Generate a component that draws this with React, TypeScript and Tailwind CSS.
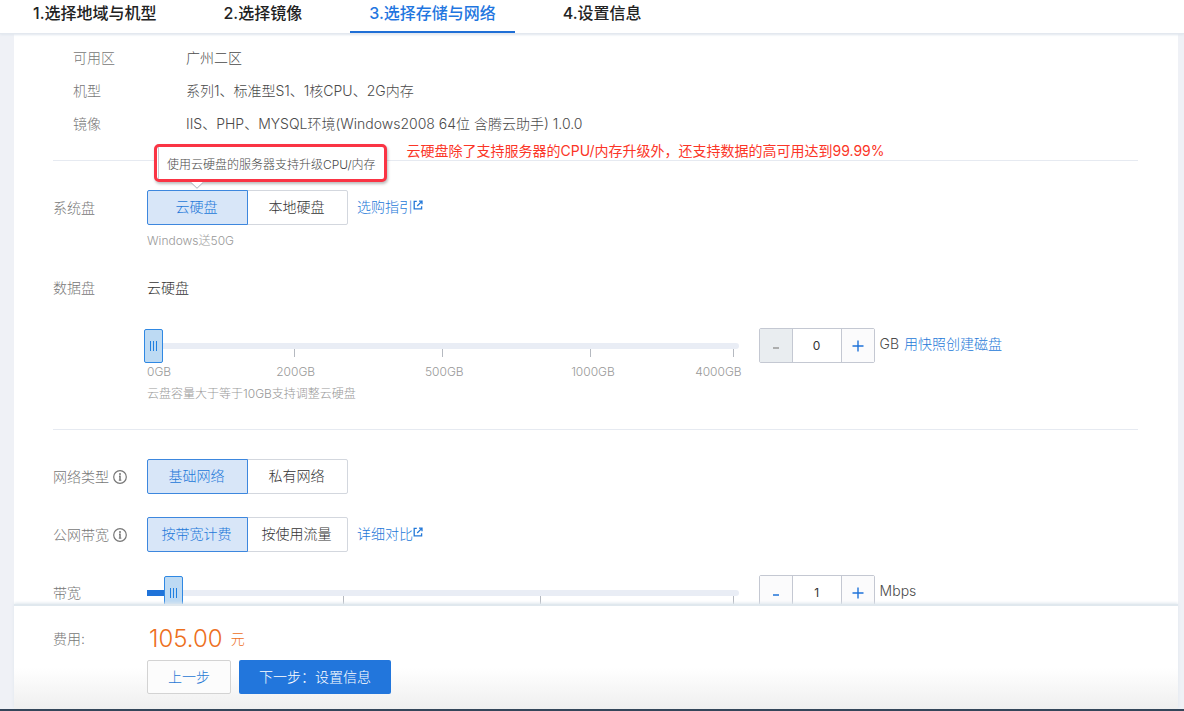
import clsx from "clsx";
import { useState, type CSSProperties, type ReactNode } from "react";

const steps = ["1.选择地域与机型", "2.选择镜像", "3.选择存储与网络", "4.设置信息"];

const summary = [
  { label: "可用区", value: "广州二区" },
  { label: "机型", value: "系列1、标准型S1、1核CPU、2G内存" },
  { label: "镜像", value: "IIS、PHP、MYSQL环境(Windows2008 64位 含腾云助手) 1.0.0" },
];

function ExternalIcon() {
  return (
    <svg
      viewBox="0 0 10 10"
      className="mb-1 size-[10px]"
      fill="none"
      stroke="currentColor"
      strokeWidth="1.3"
      aria-hidden="true"
    >
      <path d="M3.8 1.4H1.2v7.4h7.4V6.2" />
      <path d="M6 1.2h3v3M8.8 1.4L4.2 6" />
    </svg>
  );
}

function InfoIcon() {
  return (
    <svg viewBox="0 0 14 14" className="size-[14px] text-[#777]" aria-hidden="true">
      <circle cx="7" cy="7" r="6.3" fill="none" stroke="currentColor" strokeWidth="1.2" />
      <circle cx="7" cy="4" r="1" fill="currentColor" />
      <path d="M6 6.2h1v4" fill="none" stroke="currentColor" strokeWidth="1.5" />
      <path d="M5.8 10.2h2.6" fill="none" stroke="currentColor" strokeWidth="1" />
    </svg>
  );
}

function Row({
  label,
  info,
  className,
  children,
}: {
  label: string;
  info?: boolean;
  className?: string;
  children: ReactNode;
}) {
  return (
    <div className={clsx("flex items-start", className)}>
      <div className="flex h-[35px] w-[94px] shrink-0 items-center gap-1 text-[#777]">
        {label}
        {info && <InfoIcon />}
      </div>
      <div className="min-w-0 flex-1">{children}</div>
    </div>
  );
}

function Segmented({ label, options }: { label: string; options: string[] }) {
  const [active, setActive] = useState(options[0]);

  return (
    <div role="group" aria-label={label} className="flex">
      {options.map((option) => (
        <button
          key={option}
          type="button"
          aria-pressed={option === active}
          onClick={() => setActive(option)}
          className={clsx(
            "h-[35px] w-[101px] border pr-0.5 pb-0.5 first:rounded-l-xs last:-ml-px last:rounded-r-xs",
            option === active
              ? "relative border-[#3d87de] bg-[#d8e6f8] text-[#2378d8]"
              : "border-[#d3d7de] bg-white text-[#333]",
          )}
        >
          {option}
        </button>
      ))}
    </div>
  );
}

function MoreLink({ children }: { children: ReactNode }) {
  return (
    <a href="#" className="flex items-center pb-0.5 text-[#2378d8]">
      {children}
      <ExternalIcon />
    </a>
  );
}

function Slider({
  label,
  value,
  max,
  segments,
  onChange,
}: {
  label: string;
  value: number;
  max: number;
  segments: number;
  onChange: (value: number) => void;
}) {
  return (
    <div>
      <div className="-ml-[3px]">
        <input
          type="range"
          aria-label={label}
          min={0}
          max={max}
          value={value}
          onChange={(e) => onChange(Number(e.target.value))}
          style={{ "--fill": `${(value / max) * 100}%` } as CSSProperties}
          className="relative z-10 block h-[35px] w-full appearance-none bg-transparent [&::-webkit-slider-runnable-track]:h-[6px] [&::-webkit-slider-runnable-track]:rounded-r-[3px] [&::-webkit-slider-runnable-track]:bg-[linear-gradient(to_right,transparent_3px,#1f73d9_3px,#1f73d9_var(--fill),#e9edf5_var(--fill))] [&::-webkit-slider-thumb]:-mt-[14px] [&::-webkit-slider-thumb]:h-[34px] [&::-webkit-slider-thumb]:w-[19px] [&::-webkit-slider-thumb]:appearance-none [&::-webkit-slider-thumb]:rounded-xs [&::-webkit-slider-thumb]:border [&::-webkit-slider-thumb]:border-[#2f88e3] [&::-webkit-slider-thumb]:bg-[#bddaf3] [&::-webkit-slider-thumb]:bg-[repeating-linear-gradient(to_right,#1f7fe0_0_1px,transparent_1px_3px)] [&::-webkit-slider-thumb]:bg-size-[7px_10px] [&::-webkit-slider-thumb]:bg-center [&::-webkit-slider-thumb]:bg-no-repeat"
        />
      </div>
      <div className="-mt-[14px] mb-[6px] grid h-2 auto-cols-fr grid-flow-col">
        {Array.from({ length: segments }, (_, i) => (
          <div key={i} className="border-r border-[#b5b9c0] last:mr-[5px]" />
        ))}
      </div>
    </div>
  );
}

function Stepper({
  label,
  value,
  onChange,
}: {
  label: string;
  value: number;
  onChange: (value: number) => void;
}) {
  return (
    <div className="flex h-[35px] rounded-xs border border-[#c4c8d2] bg-white">
      <button
        type="button"
        aria-label={`减少${label}`}
        disabled={value === 0}
        onClick={() => onChange(value - 1)}
        className="flex w-8 items-center justify-center bg-[#fbfbfc] pt-1 text-[#1f73d9] disabled:bg-[#e9edf0] disabled:text-[#999]"
      >
        <svg viewBox="0 0 6 2" className="h-[2px] w-[6px]" aria-hidden="true">
          <path d="M0 1h6" stroke="currentColor" strokeWidth="1.5" />
        </svg>
      </button>
      <input
        type="text"
        aria-label={label}
        value={value}
        onChange={(e) => onChange(Number(e.target.value) || 0)}
        className="w-[50px] border-x border-[#c4c8d2] text-center text-xs font-normal text-[#333]"
      />
      <button
        type="button"
        aria-label={`增加${label}`}
        onClick={() => onChange(value + 1)}
        className="flex w-8 items-center justify-center bg-[#fbfbfc] text-[#1f73d9]"
      >
        <svg viewBox="0 0 12 12" className="size-3" aria-hidden="true">
          <path d="M6 .5v11M.5 6h11" stroke="currentColor" strokeWidth="1.4" />
        </svg>
      </button>
    </div>
  );
}

export default function App() {
  const [step, setStep] = useState(2);
  const [disk, setDisk] = useState(0);
  const [bandwidth, setBandwidth] = useState(1);

  return (
    <div className="flex h-screen flex-col overflow-hidden border-b-2 border-[#34465a] bg-[#eff1f6] font-['Inter','Noto_Sans_CJK_SC',sans-serif] text-sm font-light text-[#4a4a4a]">
      <nav className="relative z-20 flex shrink-0 gap-[29px] border-b border-[#e3e8ef] bg-white pl-3.5 shadow-[0_1px_2px_#e1e7ee]">
        {steps.map((title, i) => (
          <button
            key={title}
            type="button"
            onClick={() => setStep(i)}
            className={clsx(
              "border-b-2 px-[19px] pb-[5px] text-[16px] leading-[26px] font-medium",
              i === step ? "border-[#1f6fd6] text-[#1f76e0]" : "border-transparent text-[#222]",
            )}
          >
            {title}
          </button>
        ))}
      </nav>

      <main className="mr-1.5 ml-3.5 min-h-0 flex-1 overflow-hidden bg-white pt-[7px] pr-10 pl-[39px]">
        <dl className="pl-5 leading-[33px]">
          {summary.map(({ label, value }) => (
            <div key={label} className="flex">
              <dt className="w-[113px] shrink-0 text-[#777]">{label}</dt>
              <dd>{value}</dd>
            </div>
          ))}
        </dl>

        <section className="mt-5 border-t border-[#e6eaf1] pt-[29px]">
          <Row label="系统盘">
            <div className="relative flex items-center gap-[9px]">
              <Segmented label="系统盘" options={["云硬盘", "本地硬盘"]} />
              <MoreLink>选购指引</MoreLink>
              <div className="absolute bottom-full left-[7px] mb-2 flex items-start gap-5 whitespace-nowrap">
                <div
                  role="tooltip"
                  className="relative rounded-[5px] border-3 border-[#fa3444] bg-white pl-px shadow-[1px_2px_3px_#0004]"
                >
                  <div className="border-l border-[#c8ccd4] px-2 pt-1 text-xs leading-7">
                    使用云硬盘的服务器支持升级CPU/内存
                  </div>
                  <svg
                    viewBox="0 0 14 7"
                    className="absolute top-full left-[33px] mt-[3px] h-[7px] w-[14px]"
                    aria-hidden="true"
                  >
                    <path d="M.5 0L7 6.3L13.5 0" fill="#fff" stroke="#a9afba" />
                  </svg>
                </div>
                <p className="leading-[14px] font-normal text-[#fb3527]">
                  云硬盘除了支持服务器的CPU/内存升级外，还支持数据的高可用达到99.99%
                </p>
              </div>
            </div>
            <p className="mt-2 text-xs leading-4 text-[#999]">Windows送50G</p>
          </Row>

          <Row label="数据盘" className="mt-[21px]">
            <p className="leading-[35px] text-[#333]">云硬盘</p>
            <div className="mt-[23px] flex items-start gap-[17px]">
              <div className="w-3/5 pr-[3px]">
                <Slider label="数据盘容量" value={disk} max={4000} segments={4} onChange={setDisk} />
                <div className="-mr-[3px] flex pt-px text-xs leading-4 text-[#999]">
                  <span className="flex-1">0GB</span>
                  <span className="flex-2 text-center">200GB</span>
                  <span className="flex-2 text-center">500GB</span>
                  <span className="flex-2 text-center">1000GB</span>
                  <span className="flex-1 text-right">4000GB</span>
                </div>
                <p className="mt-[6px] text-xs leading-4 text-[#999]">
                  云盘容量大于等于10GB支持调整云硬盘
                </p>
              </div>
              <div className="flex items-start gap-[5px] leading-8">
                <Stepper label="容量" value={disk} onChange={setDisk} />
                <span>GB</span>
                <a href="#" className="text-[#2378d8]">
                  用快照创建磁盘
                </a>
              </div>
            </div>
          </Row>
        </section>

        <section className="mt-[27px] border-t border-[#e6eaf1] pt-[29px]">
          <Row label="网络类型" info>
            <Segmented label="网络类型" options={["基础网络", "私有网络"]} />
          </Row>
          <Row label="公网带宽" info className="mt-[23px]">
            <div className="flex items-center gap-[9px]">
              <Segmented label="公网带宽" options={["按带宽计费", "按使用流量"]} />
              <MoreLink>详细对比</MoreLink>
            </div>
          </Row>
          <Row label="带宽" className="mt-[23px]">
            <div className="flex items-start gap-[17px]">
              <div className="w-3/5 pr-[3px]">
                <Slider
                  label="带宽大小"
                  value={bandwidth}
                  max={29}
                  segments={3}
                  onChange={setBandwidth}
                />
              </div>
              <div className="flex items-start gap-[5px] leading-8">
                <Stepper label="带宽" value={bandwidth} onChange={setBandwidth} />
                <span>Mbps</span>
              </div>
            </div>
          </Row>
        </section>
      </main>

      <footer className="relative z-20 mr-1.5 ml-3.5 shrink-0 border-t-2 border-[#e0e8ee] bg-linear-to-b from-white from-60% to-[#efefef] pb-[15px] pl-[39px] shadow-[0_-1px_3px_#dfe7ee]">
        <div className="flex h-[54px] items-center pt-3">
          <span className="w-[96px] text-[#777]">费用:</span>
          <span className="text-2xl leading-8 text-[#ed6f1c]">105.00</span>
          <span className="ml-2 text-[#ed6f1c]">元</span>
        </div>
        <div className="flex gap-2 pl-[94px]">
          <button
            type="button"
            className="h-[34px] rounded-xs border border-[#d3d3d3] bg-[#fcfcfc] px-5 text-[#1f78d4]"
          >
            上一步
          </button>
          <button type="button" className="h-[34px] rounded-xs bg-[#2276dc] px-5 text-white">
            下一步：设置信息
          </button>
        </div>
      </footer>
    </div>
  );
}
